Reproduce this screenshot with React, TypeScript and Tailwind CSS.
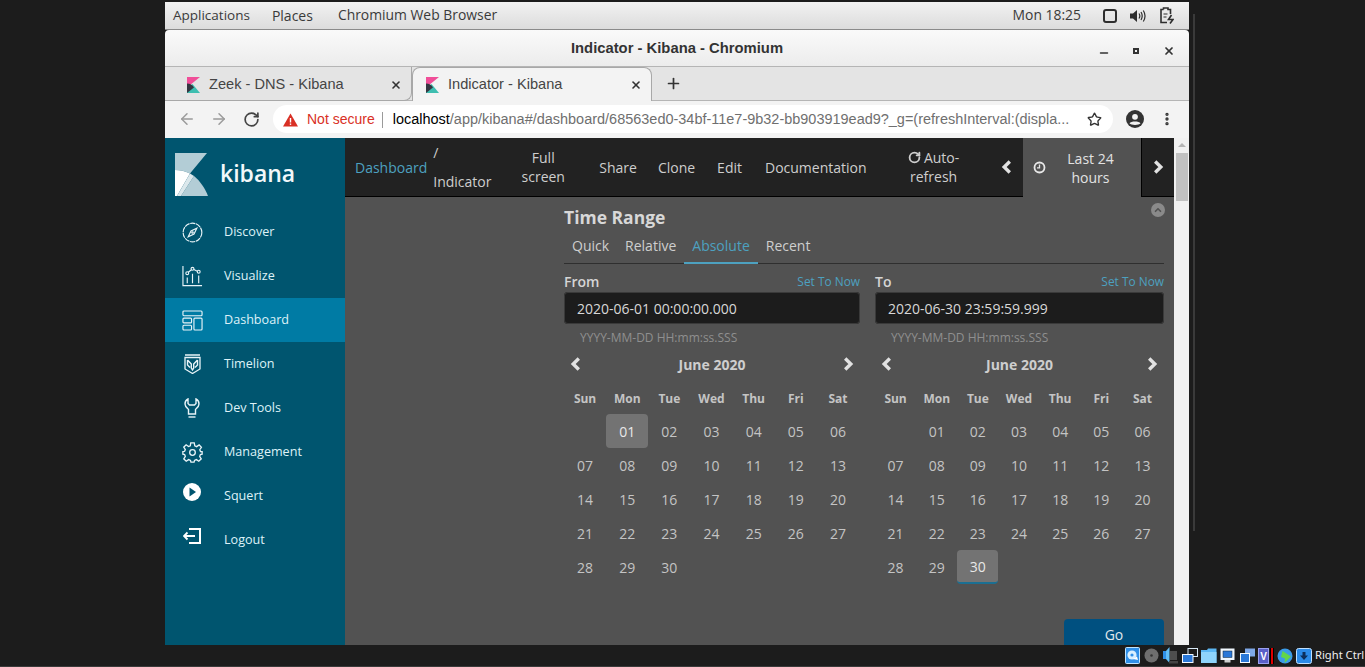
import React from "react";
import { ChevronLeft, ArrowLeft, ArrowRight, RotateCw, Star, EllipsisVertical, Plus, X, Minus } from "lucide-react";

const open = "font-['Open_Sans',sans-serif]";

function KLogo() {
  return (
    <svg width={13} height={16} viewBox="0 0 13 16" className="shrink-0">
      <path d="M0 0H13L0 10.5Z" fill="#f04e98" />
      <path d="M0 16V11.5L5.5 7L13 16Z" fill="#3ebeb0" />
      <path d="M0 6.5C3 6.5 5.5 8 7 10.5L0 16Z" fill="#343741" />
    </svg>
  );
}

function Tab({ title, active }: { title: string; active?: boolean }) {
  return (
    <div className={`relative flex h-[34px] items-center pr-[9px] ${active ? "w-[240px] rounded-t-lg border border-b-0 border-[#a8a8a8] bg-[#f3f3f3] pl-[13px]" : "w-[247px] rounded-br-lg border-r border-b border-[#a8a8a8] pl-[22px] pt-[2px]"}`}>
      <KLogo />
      <span className="ml-[9px] flex-1 text-[14.6px] text-[#454545]">{title}</span>
      <X size={12} strokeWidth={3.2} className="text-[#333]" />
    </div>
  );
}

const nav = [
  ["Discover", "compass"],
  ["Visualize", "chart"],
  ["Dashboard", "dash"],
  ["Timelion", "shield"],
  ["Dev Tools", "wrench"],
  ["Management", "gear"],
  ["Squert", "play"],
  ["Logout", "logout"],
];

function NavIcon({ kind }: { kind: string }) {
  const c = { fill: "none", stroke: "#e8f4f8", strokeWidth: 1.2 };
  switch (kind) {
    case "compass":
      return (
        <svg width="21" height="21" viewBox="0 0 22 22" {...c}>
          <circle cx="11" cy="11" r="9.8" strokeDasharray="5.5 .7" />
          <path d="M15.5 6.5L12.6 12.6L6.5 15.5L9.4 9.4Z" />
          <circle cx="11" cy="11" r=".8" />
        </svg>
      );
    case "chart":
      return (
        <svg width="21" height="21" viewBox="0 0 22 22" {...c}>
          <path d="M1 0V20.5H21" />
          <circle cx="5.5" cy="7.5" r="1.5" />
          <circle cx="11" cy="3" r="1.5" />
          <circle cx="17.5" cy="6" r="1.5" />
          <path d="M6.6 6.5L9.9 4M12.4 3.7L16 5.4M5.5 12V18M11 8V18M17.5 10V18" />
        </svg>
      );
    case "dash":
      return (
        <svg width="21" height="21" viewBox="0 0 22 22" {...c}>
          <rect x="1" y="1" width="20" height="5" rx="1" />
          <rect x="1" y="8.5" width="9" height="5" rx="1" />
          <rect x="1" y="16" width="9" height="5" rx="1" />
          <rect x="12.5" y="8.5" width="8.5" height="12.5" rx="1" />
        </svg>
      );
    case "shield":
      return (
        <svg width="17" height="20" viewBox="0 0 17 20" {...c}>
          <path d="M1 1H16M1 3.5H16V15L8.5 19.5L1 15Z" strokeWidth="1.3" />
          <path d="M3.5 6L7.3 10V14L8.5 16L9.7 14V10L13.5 6M3.5 6V11L6 13.5M13.5 6V11L11 13.5" strokeWidth="1.4" />
        </svg>
      );
    case "wrench":
      return (
        <svg width="16" height="20" viewBox="0 0 16 20" {...c}>
          <path d="M4 1C2 2 1 4 1 6C1 8.5 3 10 4.5 11.5V16H11.5V11.5C13 10 15 8.5 15 6C15 4 14 2 12 1V5.5L10.5 7H5.5L4 5.5Z" strokeWidth="1.4" />
          <path d="M4.5 19H11.5" strokeWidth="1.4" />
        </svg>
      );
    case "gear":
      return (
        <svg width="21" height="21" viewBox="0 0 24 24" fill="none" stroke="#e8f4f8" strokeWidth="1.5">
          <circle cx="12" cy="12" r="3.2" />
          <path d="M10 1H14L14.6 4.4L16.7 5.3L19.6 3.3L22.2 6L20.3 8.8L21.2 10.9L23 11V14L21 14.3L20.2 16.4L22 19.2L19.2 22L16.4 20.1L14.3 21L13.8 23H10.2L9.7 21L7.6 20.1L4.8 22L2 19.2L3.8 16.4L3 14.3L1 14V11L3 10.6L3.8 8.6L2 5.9L4.7 3.2L7.5 5.2L9.5 4.4Z" />
        </svg>
      );
    case "play":
      return (
        <svg width="18" height="18" viewBox="0 0 18 18">
          <circle cx="9" cy="9" r="9" fill="#fff" />
          <path d="M6.5 4.5L13 9L6.5 13.5Z" fill="#00556f" />
        </svg>
      );
    default:
      return (
        <svg width="18" height="16" viewBox="0 0 18 16" fill="none" stroke="#fff" strokeWidth="2">
          <path d="M6 1H17V15H6M1 8H12" />
          <path d="M4.5 4.5L1 8L4.5 11.5" strokeWidth="1.8" />
        </svg>
      );
  }
}

function Sidebar() {
  return (
    <aside className={`${open} flex w-[180px] shrink-0 flex-col bg-[#00556f]`}>
      <div className="flex h-[71px] items-center pl-[10px] pt-[2px]">
        <svg width="33" height="43" viewBox="0 0 33 43" className="shrink-0">
          <path d="M0 0H32L15 20.5C10 18 5 17 0 17Z" fill="#b3cdd6" />
          <path d="M19 23C25 28 30 35 33 43H6Z" fill="#b3cdd6" />
          <path d="M0 17C5 17 10 18 15 20.5L2 43H0Z" fill="#fff" />
          <path d="M15 20.5L19 23L6 43H2Z" fill="#dce8ec" />
        </svg>
        <span className="mb-[3px] ml-[12px] text-[23px] font-semibold leading-none text-[#f2f8fa]">kibana</span>
      </div>
      <div className="flex flex-col pt-[1px]">
        {nav.map(([label, kind]) => (
          <div key={label} className={`flex h-[44px] items-center ${label === "Dashboard" ? "bg-[#007ba4]" : ""}`}>
            <div className="flex w-[54px] items-center justify-center">
              <div className={`flex w-[22px] justify-center ${kind === "play" || kind === "logout" ? "-mt-[8px]" : ""}`}>
                <NavIcon kind={kind} />
              </div>
            </div>
            <span className="ml-[5px] text-[12.6px] text-[#def2f8]">{label}</span>
          </div>
        ))}
      </div>
    </aside>
  );
}

function FaChevron({ dir, size = 16 }: { dir: "l" | "r"; size?: number }) {
  return (
    <svg width={size} height={size} viewBox="0 0 16 16" fill="none" stroke="#e2e2e2" strokeWidth="3.4" className="shrink-0">
      <path d={dir === "l" ? "M10.8 2.5L5.2 8L10.8 13.5" : "M5.2 2.5L10.8 8L5.2 13.5"} />
    </svg>
  );
}

function TopNav() {
  return (
    <div className="flex h-[59px] items-stretch">
      <div className="flex flex-1 items-center border-b border-black bg-[#222] text-[14px] leading-[19px] text-[#cecece]">
        <span className="ml-[10px] text-[#4da1c0]">Dashboard</span>
        <div className="ml-[6px] flex w-[60px] flex-col text-left leading-[29px]">
          <span>/</span>
          <span>Indicator</span>
        </div>
        <div className="ml-[17px] w-[66px] text-center">Full<br />screen</div>
        <span className="ml-[23px]">Share</span>
        <span className="ml-[21px]">Clone</span>
        <span className="ml-[22px]">Edit</span>
        <span className="ml-[23px]">Documentation</span>
        <div className="ml-[27px] w-[80px] text-center">
          <RotateCw size={13} strokeWidth={3.4} className="mr-[3px] inline-block -mt-[3px]" />Auto-<br />refresh
        </div>
        <div className="ml-[25px]"><FaChevron dir="l" /></div>
      </div>
      <div className="flex w-[118px] items-center bg-[#525252] text-[14px] leading-[19px] text-[#e2e2e2]">
        <svg width="13" height="13" viewBox="0 0 13 13" className="ml-[10px] shrink-0" fill="none" stroke="#e8e8e8" strokeWidth="1.8">
          <circle cx="6.5" cy="6.5" r="5" />
          <path d="M6.5 3.5V6.8H4" strokeWidth="1.3" />
        </svg>
        <div className="ml-[10px] flex-1 pr-[16px] text-center">Last 24<br />hours</div>
      </div>
      <div className="flex w-[33px] items-center justify-center border-b border-l border-black bg-[#222]">
        <FaChevron dir="r" />
      </div>
    </div>
  );
}

const rows = [
  ["", "01", "02", "03", "04", "05", "06"],
  ["07", "08", "09", "10", "11", "12", "13"],
  ["14", "15", "16", "17", "18", "19", "20"],
  ["21", "22", "23", "24", "25", "26", "27"],
  ["28", "29", "30", "", "", "", ""],
];
const heads = ["Sun", "Mon", "Tue", "Wed", "Thu", "Fri", "Sat"];

function Picker({ label, value, selected, link, widthClass, bordered }: { label: string; value: string; selected: string; link: string; widthClass: string; bordered?: boolean }) {
  return (
    <div className={`${widthClass} flex flex-col`}>
      <div className="flex h-[17px] items-center justify-between">
        <span className="text-[14px] font-semibold text-[#d5d5d5]">{label}</span>
        <span className="text-[11.9px] text-[#4da1c0]">{link}</span>
      </div>
      <div className="mt-[2px] flex h-[32px] items-center rounded bg-[#1c1c1c] pl-[13px] text-[14px] text-[#d8d8d8] shadow-[inset_0_0_0_1px_#3a3a3a]">{value}</div>
      <div className="mt-[6px] pl-[16px] text-[12px] leading-[16px] text-[#8f8f8f]">YYYY-MM-DD HH:mm:ss.SSS</div>
      <div className="mt-[8px] flex h-[20px] items-center justify-between pl-[4px] pr-[4px]">
        <FaChevron dir="l" />
        <span className="text-[14px] font-bold text-[#cecece]">June 2020</span>
        <FaChevron dir="r" />
      </div>
      <div className="mt-[15px] grid grid-cols-7 pr-[1px]">
        {heads.map((h) => (
          <div key={h} className="h-[20px] text-center text-[12px] font-bold leading-[20px] text-[#c4c4c4]">{h}</div>
        ))}
      </div>
      <div className="mt-[5px] grid grid-cols-7 pr-[1px]">
        {rows.flat().map((d, i) => (
          <div key={i} className={`flex h-[34px] items-center justify-center text-[14px] ${d === selected ? `rounded bg-[#737373] text-[#e8e8e8] ${bordered ? "border-b-2 border-[#1b6f92]" : ""}` : "text-[#c4c4c4]"}`}>{d}</div>
        ))}
      </div>
    </div>
  );
}

function Content() {
  return (
    <div className={`relative flex-1 overflow-hidden bg-[#525252] ${open}`}>
      <div className="ml-[219px] w-[600px] pt-[9px]">
        <div className="text-[17.5px] font-bold leading-[22px] text-[#d8d8d8]">Time Range</div>
        <div className="mt-[4px] flex h-[32px] border-b border-[#2f2f2f] text-[14px] text-[#cecece]">
          <div className="px-[8px] pt-[3px]">Quick</div>
          <div className="px-[8px] pt-[3px]">Relative</div>
          <div className="h-[32px] border-b-2 border-[#4da1c0] px-[8px] pt-[3px] text-[#4da1c0]">Absolute</div>
          <div className="px-[8px] pt-[3px]">Recent</div>
        </div>
        <div className="mt-[9px] flex gap-[15px]">
          <Picker label="From" value="2020-06-01 00:00:00.000" selected="01" link="Set To Now" widthClass="w-[296px]" />
          <Picker label="To" value="2020-06-30 23:59:59.999" selected="30" link="Set To Now" widthClass="w-[289px]" bordered />
        </div>
      </div>
      <div className="absolute right-[9px] top-[6px] flex h-[14px] w-[14px] items-center justify-center rounded-full bg-[#8a8a8a]">
        <ChevronLeft size={10} strokeWidth={4} className="rotate-90 text-[#525252]" />
      </div>
      <div className="absolute left-[719px] top-[422px] flex h-[34px] w-[100px] items-center justify-center rounded-t bg-[#005080] pb-[4px] text-[14px] text-[#e0e8ee]">Go</div>
    </div>
  );
}

function Tray() {
  return (
    <div className="flex h-[22px] items-center overflow-hidden whitespace-nowrap border-b border-[#3a3a3a] bg-[#1c1c1c] pl-[1125px]">
      <svg width="15" height="17" viewBox="0 0 15 17" className="shrink-0"><rect x=".5" y=".5" width="14" height="16" rx="1" fill="#2f8fe8" stroke="#bfe4ff" /><circle cx="7" cy="8" r="4.6" fill="#d8efff" /><circle cx="7" cy="8" r="1.6" fill="#2f8fe8" /><path d="M8 12L12 9.5L13 13Z" fill="#fff" /></svg>
      <svg width="15" height="15" viewBox="0 0 15 15" className="ml-[4px] shrink-0"><circle cx="7.5" cy="7.5" r="7" fill="#6e6e6e" /><circle cx="7.5" cy="7.5" r="1.3" fill="#333" /></svg>
      <svg width="15" height="17" viewBox="0 0 15 17" className="ml-[4px] shrink-0"><path d="M0 4H3V12H0Z" fill="#2f8fe8" /><path d="M3 4L6.5 0V16L3 12Z" fill="#62bdf6" /><rect x="7" y="4" width="7" height="9" fill="#4e4e4e" /><rect x="6" y="14" width="9" height="2.5" fill="#454545" /></svg>
      <svg width="16" height="16" viewBox="0 0 16 16" className="ml-[4px] shrink-0"><rect x="6" y=".5" width="9.5" height="8" fill="#1c1c1c" stroke="#d8e8f5" /><rect x=".5" y="6.5" width="10.5" height="8" fill="#2a78d8" stroke="#f4faff" /></svg>
      <svg width="16" height="15" viewBox="0 0 16 15" className="ml-[3px] shrink-0"><path d="M0 2H6L7 0.5H15.5V15H0Z" fill="#5db8f4" /><path d="M0 4H15.5V15H0Z" fill="#8fd4fb" /></svg>
      <svg width="15" height="16" viewBox="0 0 15 16" className="ml-[3px] shrink-0"><rect x=".5" y=".5" width="14" height="11.5" fill="#f0f8ff" /><rect x="3" y="3" width="9" height="6.5" fill="#2a78d8" stroke="#123" strokeWidth=".5" /><rect x="4.5" y="12" width="6" height="2.5" fill="#d0d0d0" /></svg>
      <svg width="15" height="15" viewBox="0 0 15 15" className="ml-[5px] shrink-0"><rect x="5" y=".5" width="10" height="8" fill="#7ea8e8" /><rect x=".5" y="5.5" width="9" height="9" fill="#2a78d8" stroke="#f4faff" /></svg>
      <svg width="11" height="16" viewBox="0 0 11 16" className="ml-[3px] shrink-0"><rect x=".5" y=".5" width="10" height="15" fill="#5a60c8" stroke="#9aa0f0" /><text x="5.5" y="12" textAnchor="middle" fontSize="10" fontWeight="700" fill="#fff" fontFamily="Liberation Sans">V</text></svg>
      <div className="ml-[1px] flex h-[16px] w-[4px] shrink-0 justify-center bg-black"><div className="w-[2px] bg-[#e00000]" /></div>
      <svg width="16" height="16" viewBox="0 0 16 16" className="ml-[3px] shrink-0"><circle cx="8" cy="8" r="7.5" fill="#3b9be8" /><path d="M5.5 3L14 8.5L7.5 15L8 10.5L4 9Z" fill="#63d64a" /></svg>
      <svg width="16" height="16" viewBox="0 0 16 16" className="ml-[3px] shrink-0"><rect x=".5" y=".5" width="15" height="15" rx="2" fill="#2a8ae8" stroke="#bfe0ff" /><path d="M8 12L4 7.5H6.5V4H9.5V7.5H12Z" fill="#0c2f5c" /></svg>
      <span className="ml-[3px] font-['Noto_Sans',sans-serif] text-[11.2px] text-[#f0f0f0]">Right Ctrl</span>
    </div>
  );
}

export default function App() {
  return (
    <div className="flex h-[667px] w-[1365px] flex-col overflow-hidden bg-[#1c1c1c] font-['Liberation_Sans',sans-serif]">
      <div className="flex h-[645px] shrink-0">
        <div className="w-[165px] shrink-0" />
        <div className="flex w-[1024px] shrink-0 flex-col pt-[2px]">
          <div className={`${open} flex h-[28px] shrink-0 items-center border-b border-[#8a8a8a] bg-gradient-to-b from-[#f2f2f2] to-[#dcdcdc] pl-[8px] pr-[15px] text-[13.5px] text-[#3a3a3a]`}>
            <span>Applications</span>
            <span className="ml-[22px] text-[14px]">Places</span>
            <span className="ml-[25px] text-[13.9px]">Chromium Web Browser</span>
            <span className="ml-auto text-[13.9px]">Mon 18:25</span>
            <span className="ml-[22px] h-[14px] w-[14px] rounded-[3px] border-2 border-[#2e2e2e]" />
            <svg width="16" height="14" viewBox="0 0 16 14" className="ml-[13px]" fill="none" stroke="#2e2e2e"><path d="M0 4.5H3L7 1V13L3 9.5H0Z" fill="#2e2e2e" stroke="none" /><path d="M9 4.5C10 6 10 8 9 9.5M11 3C12.5 5.5 12.5 8.5 11 11M13.3 1.5C15.5 5 15.5 9 13.3 12.5" strokeWidth="1.2" /></svg>
            <svg width="14" height="17" viewBox="0 0 14 17" className="ml-[14px]" fill="none" stroke="#2e2e2e" strokeWidth="1.6"><path d="M3.5 2.5H1V15.5H7M3.5 2.5V1H8V2.5H10.5V7" /><path d="M3.5 7H7.5M3.5 10H6.5" strokeWidth="1.2" /><path d="M11.5 8L8.5 12.5H13L10 16.5" strokeWidth="1.6" /></svg>
          </div>
          <div className="relative flex h-[37px] shrink-0 items-center justify-center rounded-t-[4px] border-b border-[#b5b5b5] bg-gradient-to-b from-[#fafafa] to-[#ececec] text-[14.8px] font-bold text-[#333]">
            Indicator - Kibana - Chromium
            <div className="absolute left-[933px] top-[12px] flex items-center">
              <Minus size={12} strokeWidth={3} className="mt-[5px] text-[#333]" />
              <span className="ml-[23px] h-[6px] w-[6px] border-[2px] border-[#333]" />
              <X size={12} strokeWidth={3.5} className="ml-[24px] text-[#333]" />
            </div>
          </div>
          <div className="flex h-[34px] shrink-0 items-end border-b border-[#b5b5b5] bg-[#e4e4e4]">
            <div className="mb-[-1px] flex">
              <Tab title="Zeek - DNS - Kibana" />
              <Tab title="Indicator - Kibana" active />
            </div>
            <Plus size={17} strokeWidth={2.4} className="mb-[8px] ml-[13px] text-[#333]" />
          </div>
          <div className="flex h-[37px] shrink-0 items-center bg-[#f3f3f3] pb-[1px]">
            <ArrowLeft size={18} strokeWidth={2} className="ml-[13px] text-[#9b9b9b]" />
            <ArrowRight size={18} strokeWidth={2} className="ml-[14px] text-[#9b9b9b]" />
            <RotateCw size={17} strokeWidth={2.4} className="ml-[15px] text-[#444]" />
            <div className="ml-[13px] flex h-[28px] w-[840px] items-center rounded-full bg-white pl-[10px] pr-[11px] pt-[1px]">
              <svg width="15" height="14" viewBox="0 0 15 14" className="shrink-0"><path d="M7.5 0.5L15 13.5H0Z" fill="#d93025" /><rect x="6.8" y="5" width="1.4" height="4.5" fill="#fff" /><rect x="6.8" y="10.5" width="1.4" height="1.4" fill="#fff" /></svg>
              <span className="ml-[9px] text-[14px] text-[#d93025]">Not secure</span>
              <span className="ml-[7px] mr-[10px] h-[16px] w-px shrink-0 bg-[#9a9a9a]" />
              <span className="text-[14.47px] text-black">localhost</span>
              <span className="flex-1 whitespace-nowrap text-[14.47px] text-[#6f6f6f]">/app/kibana#/dashboard/68563ed0-34bf-11e7-9b32-bb903919ead9?_g=(refreshInterval:(displa...</span>
              <Star size={15} strokeWidth={2.2} className="ml-[14px] shrink-0 text-[#333]" />
            </div>
            <svg width="18" height="18" viewBox="0 0 18 18" className="ml-[13px] shrink-0"><circle cx="9" cy="9" r="9" fill="#333" /><circle cx="9" cy="6.8" r="2.9" fill="#f3f3f3" /><path d="M3.5 13.3C5 11 13 11 14.5 13.3C13 15.5 5 15.5 3.5 13.3Z" fill="#f3f3f3" /></svg>
            <EllipsisVertical size={16} strokeWidth={3} className="ml-[15px] text-[#333]" />
          </div>
          <div className="flex min-h-0 flex-1">
            <Sidebar />
            <div className="flex min-w-0 flex-1 flex-col">
              <div className={open}><TopNav /></div>
              <Content />
            </div>
            <div className="flex w-[15px] shrink-0 flex-col bg-[#f1f1f1]">
              <div className="mx-auto mt-[5px] h-0 w-0 border-x-[4px] border-b-[4px] border-x-transparent border-b-[#b5b5b5]" />
              <div className="mx-auto mt-[6px] h-[48px] w-[12px] bg-[#c1c1c1]" />
            </div>
          </div>
        </div>
        <div className="flex-1 pl-[4px] pt-[14px]">
          <div className="h-[517px] w-[2px] bg-[#3a3a3a]" />
        </div>
      </div>
      <Tray />
    </div>
  );
}
